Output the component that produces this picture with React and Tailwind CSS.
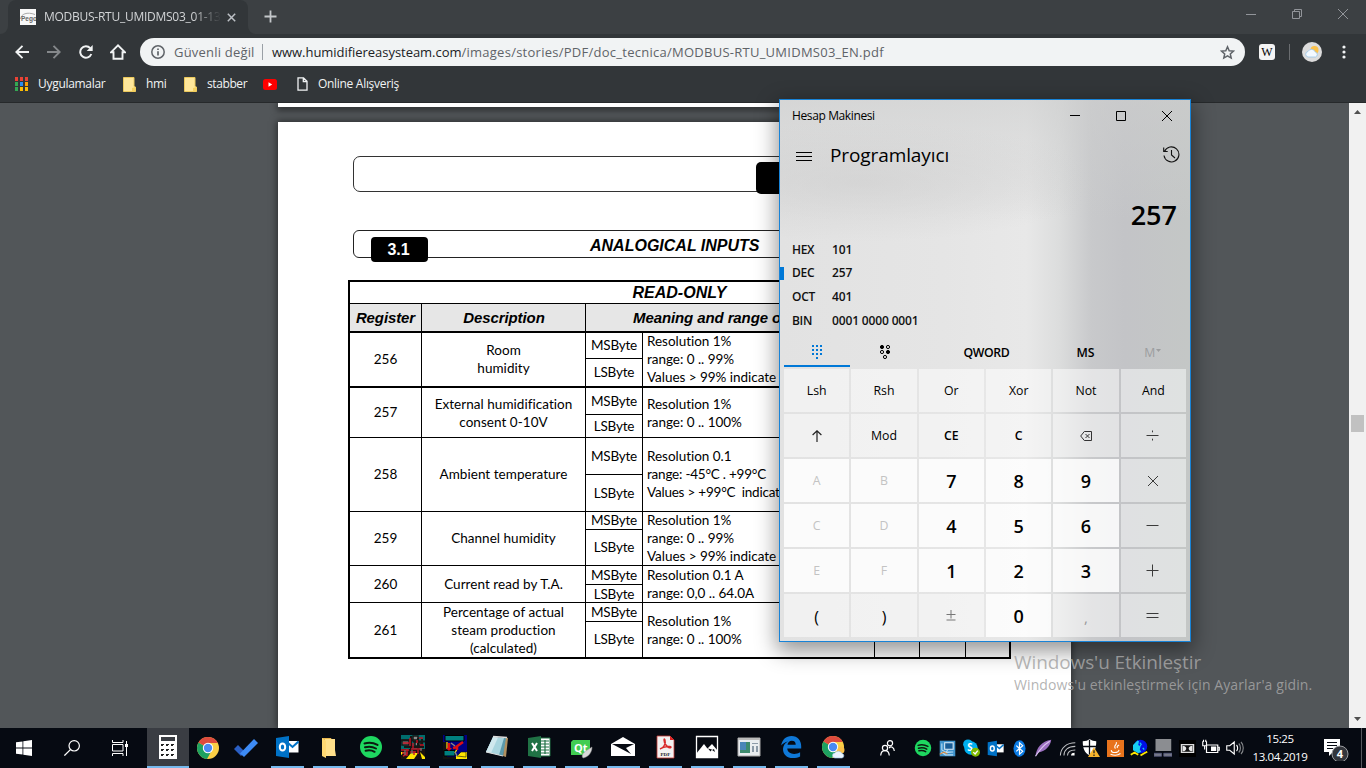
import React from "react";

const UI = "font-['Open_Sans','Noto_Sans',sans-serif]";

/* ---------- browser ---------- */

function TabStrip() {
  return (
    <div className="flex h-[34px] bg-[#3c4043]">
      <div className="flex w-2 items-end bg-[#323639]">
        <div className="h-[34px] w-2 rounded-br-lg bg-[#3c4043]" />
      </div>
      <div className="flex h-[34px] w-[240px] items-center rounded-t-lg bg-[#323639] pl-3">
        <svg width="16" height="16" viewBox="0 0 16 16" className="shrink-0">
          <rect width="16" height="16" fill="#f8f8f8" />
          <path d="M.5 10C1 5 7 2.500 15 5.500" stroke="#aaa" fill="none" />
          <text x="1" y="12" fontSize="6.500" fontWeight="700" fill="#666" fontFamily="Liberation Sans">Pego</text>
        </svg>
        <div className="ml-2 w-[177px] overflow-hidden whitespace-nowrap text-[12px] leading-[18px] tracking-[-0.26px] text-[#d2d4d6] [mask-image:linear-gradient(to_right,black_84%,transparent)]">
          MODBUS-RTU_UMIDMS03_01-13
        </div>
        <svg width="9" height="9" viewBox="0 0 9 9" className="ml-[6px] shrink-0">
          <path d="M.8.8l7.4 7.4M8.2.8L.8 8.2" stroke="#bdc1c6" strokeWidth="1.5" />
        </svg>
      </div>
      <div className="flex w-2 bg-[#323639]">
        <div className="h-[34px] w-2 rounded-bl-lg bg-[#3c4043]" />
      </div>
      <svg width="13" height="13" viewBox="0 0 13 13" className="ml-[8px] mt-[10px]">
        <path d="M6.500.5v12M.5 6.500h12" stroke="#c4c7ca" strokeWidth="1.8" />
      </svg>
      <div className="ml-auto mr-[18px] mt-[9px] flex gap-9">
        <svg width="10" height="11" viewBox="0 0 10 11"><path d="M0 5.500h10" stroke="#92959a" /></svg>
        <svg width="10" height="11" viewBox="0 0 10 11"><path d="M.5 2.500h7v7h-7zM2.500 2.500v-2h7v7h-2" fill="none" stroke="#92959a" /></svg>
        <svg width="10" height="10" viewBox="0 0 10 10"><path d="M0 0l10 10M10 0L0 10" stroke="#92959a" /></svg>
      </div>
    </div>
  );
}

function Toolbar() {
  return (
    <div className="flex h-9 items-center bg-[#323639]">
      <svg width="14" height="14" viewBox="0 0 14 14" className="ml-[15px]"><path d="M14 7H1.500M7.500.8L1.300 7l6.200 6.200" fill="none" stroke="#f1f3f4" strokeWidth="1.9" /></svg>
      <svg width="14" height="14" viewBox="0 0 14 14" className="ml-[18px]"><path d="M0 7h12.500M6.500.8L12.700 7l-6.200 6.200" fill="none" stroke="#85888b" strokeWidth="1.9" /></svg>
      <svg width="14" height="14" viewBox="0 0 14 14" className="ml-[18px]">
        <path d="M12.300 9A5.700 5.700 0 1 1 11.200 3.200" fill="none" stroke="#f1f3f4" strokeWidth="2" />
        <path d="M13.700 0v6H7.700z" fill="#f1f3f4" />
      </svg>
      <svg width="16" height="16" viewBox="0 0 16 16" className="ml-[17px]"><path d="M1.200 8.200L8 1.400l6.800 6.800h-2.300V14.800h-9V8.200z" fill="none" stroke="#f1f3f4" strokeWidth="1.9" /></svg>
      <div className="ml-[14px] flex h-7 w-[1105px] items-center rounded-full bg-[#f1f3f4] text-[#5f6368]">
        <svg width="14" height="14" viewBox="0 0 14 14" className="ml-[11px]"><circle cx="7" cy="7" r="6.200" fill="none" stroke="#5f6368" strokeWidth="1.500" /><path d="M7 6.200v4.200M7 3.500v1.600" stroke="#5f6368" strokeWidth="1.700" /></svg>
        <span className="ml-[9px] w-[81px] whitespace-nowrap pt-px text-[13px] tracking-[0.2px]">Güvenli değil</span>
        <span className="mx-[7px] h-4 w-px bg-[#9aa0a6]" />
        <span className="ml-[2px] whitespace-nowrap pt-px text-[13px] tracking-[0.26px]">
          <span className="tracking-[-0.04px] text-[#202124]">www.humidifiereasysteam.com</span>/images/stories/PDF/doc_tecnica/MODBUS-RTU_UMIDMS03_EN.pdf
        </span>
        <svg width="15" height="15" viewBox="0 0 15 15" className="ml-auto mr-[10px]"><path d="M7.500 1.800l1.700 3.900 4.300.4-3.200 2.800.9 4.200-3.700-2.200-3.700 2.200.9-4.200L1.500 6.100l4.300-.4z" fill="none" stroke="#5f6368" strokeWidth="1.500" /></svg>
      </div>
      <div className="ml-[14px] flex h-4 w-4 items-center justify-center rounded-[3px] bg-[#f4f4f4] font-['Liberation_Serif',serif] text-[12px] text-black">W</div>
      <div className="ml-[14px] h-4 w-px bg-[#6a6d70]" />
      <svg width="20" height="20" viewBox="0 0 20 20" className="ml-[12px]">
        <circle cx="10" cy="10" r="10" fill="#dcdcdc" /><circle cx="12.500" cy="8" r="4" fill="#fbc14a" />
        <path d="M6 15a2.800 2.800 0 0 1 0-5.500 4 4 0 0 1 7.300.5A2.600 2.600 0 0 1 13.500 15z" fill="#f3f9ff" stroke="#8fc1e8" strokeWidth=".7" />
      </svg>
      <svg width="4" height="14" viewBox="0 0 4 14" className="ml-[20px]"><g fill="#f1f3f4"><circle cx="2" cy="2" r="1.600" /><circle cx="2" cy="7" r="1.600" /><circle cx="2" cy="12" r="1.600" /></g></svg>
    </div>
  );
}

function FolderMark() {
  return (
    <svg width="13" height="15" viewBox="0 0 13 15" className="mr-[10px] shrink-0">
      <path d="M.5.500h10.500v9l1.500.5v4.500H.5z" fill="#ffe79a" stroke="#ecc95c" /><path d="M9 14.500v-3.500l3.500-1v4.500z" fill="#f5d160" />
    </svg>
  );
}

function Bookmarks() {
  const colors = ["#ea4335", "#ea4335", "#ea4335", "#34a853", "#2b8cf0", "#fb9d05", "#34a853", "#fbbc05", "#fbbc05"];
  return (
    <div className="flex h-[33px] items-center border-b border-[#26292b] bg-[#323639] pb-[4px] text-[12px] text-[#f1f3f4]">
      <div className="ml-[15px] flex w-[108px] items-center tracking-[-0.3px]">
        <svg width="13" height="14" viewBox="0 0 13 14" className="mr-[10px]">
          {colors.map((c, i) => <rect key={i} x={(i % 3) * 5} y={Math.floor(i / 3) * 5} width="3" height="4" fill={c} />)}
        </svg>
        Uygulamalar
      </div>
      <div className="flex w-[61px] items-center tracking-[-0.4px]"><FolderMark />hmi</div>
      <div className="flex w-[79px] items-center tracking-[-0.4px]"><FolderMark />stabber</div>
      <svg width="14" height="11" viewBox="0 0 14 11"><rect width="14" height="11" rx="2.500" fill="#f00" /><path d="M5.500 3.300v4.400l3.700-2.200z" fill="#fff" /></svg>
      <svg width="11" height="14" viewBox="0 0 11 14" className="ml-[20px] mr-[10px]"><path d="M1 .8h5.500L10 4.300v8.900H1zM6.300.8v3.700H10" fill="none" stroke="#f1f3f4" strokeWidth="1.300" /></svg>
      <span className="tracking-[-0.3px]">Online Alışveriş</span>
    </div>
  );
}

/* ---------- document ---------- */

const rows = [
  { reg: "256", desc: ["Room", "humidity"], text: ["Resolution 1%", "range: 0 .. 99%", "Values > 99% indicate"], h: "h-[55px] border-b-2", ms: "h-[26px] pb-[2px]", cell: "pb-px" },
  { reg: "257", desc: ["External humidification", "consent 0-10V"], text: ["Resolution 1%", "range: 0 .. 100%"], h: "h-[50px] border-b", ms: "h-[27px]", cell: "pt-px" },
  { reg: "258", desc: ["Ambient temperature"], text: ["Resolution 0.1", "range: -45°C . +99°C", "Values > +99°C  indicat"], h: "h-[74px] border-b", ms: "h-[37px]", cell: "pb-px" },
  { reg: "259", desc: ["Channel humidity"], text: ["Resolution 1%", "range: 0 .. 99%", "Values > 99% indicate"], h: "h-[54px] border-b", ms: "h-[18px] pb-[2px]", cell: "pb-px" },
  { reg: "260", desc: ["Current read by T.A."], text: ["Resolution 0.1 A", "range: 0,0 .. 64.0A"], h: "h-[37px] border-b", ms: "h-[19px]", cell: "" },
  { reg: "261", desc: ["Percentage of actual", "steam production", "(calculated)"], text: ["Resolution 1%", "range: 0 .. 100%"], h: "h-[54px]", ms: "h-[19px]", cell: "" },
];

function RegisterTable() {
  return (
    <div className="ml-[70px] mt-[22px] w-[663px] border-2 border-black text-black">
      <div className="flex h-[22px] items-center justify-center border-b border-black font-['Liberation_Sans',sans-serif] text-[16px] font-bold italic">
        READ-ONLY
      </div>
      <div className="flex h-[29px] border-b-2 border-black bg-[#e6e6e6] font-['Liberation_Sans',sans-serif] text-[15px] font-bold italic tracking-[-0.1px]">
        <div className="flex w-[72px] items-center justify-center border-r border-black pt-[2px]">Register</div>
        <div className="flex w-[164px] items-center justify-center border-r border-black pl-px pt-[2px]">Description</div>
        <div className="flex flex-1 items-center whitespace-nowrap pl-[47px] pt-[2px]">Meaning and range o</div>
      </div>
      {rows.map((r) => (
        <div key={r.reg} className={`flex border-black font-['Lato','Open_Sans',sans-serif] text-[13.5px] leading-[18px] [font-variant-ligatures:none] ${r.h}`}>
          <div className="flex w-[72px] items-center justify-center border-r border-black pb-px">{r.reg}</div>
          <div className={`flex w-[164px] flex-col items-center justify-center border-r border-black tracking-[0.04px] ${r.cell}`}>
            {r.desc.map((d) => <span key={d} className="whitespace-nowrap">{d}</span>)}
          </div>
          <div className="flex w-[57px] flex-col border-r border-black tracking-[-0.2px]">
            <div className={`flex shrink-0 items-center justify-center border-b border-black ${r.ms}`}>MSByte</div>
            <div className="flex flex-1 items-center justify-center pb-px">LSByte</div>
          </div>
          <div className={`flex w-[232px] flex-col justify-center border-r border-black pl-1 ${r.cell}`}>
            {r.text.map((d) => <span key={d} className={`whitespace-pre ${d.includes("°") ? "tracking-[-0.22px]" : "tracking-[-0.03px]"}`}>{d}</span>)}
          </div>
          <div className="w-[45px] border-r border-black" />
          <div className="w-[46px] border-r border-black" />
        </div>
      ))}
    </div>
  );
}

function Viewer() {
  return (
    <div className="flex h-[625px] overflow-hidden bg-[#525659]">
      <div className="ml-[278px] flex w-[793px] flex-col">
        <div className="h-[4px] shrink-0 bg-white shadow-[0_2px_6px_1px_rgba(0,0,0,0.55)]" />
        <div className="mt-[15px] flex-1 bg-white shadow-[0_0_7px_1px_rgba(0,0,0,0.5)]">
          <div className="ml-[75px] mt-[34px] flex h-[36px] w-[655px] rounded-[7px] border border-[#333]">
            <div className="ml-[402px] mt-[5px] h-[32px] w-[70px] rounded-[5px] bg-black" />
          </div>
          <div className="ml-[75px] mt-[38px] flex h-[28px] w-[655px] rounded-[6px] border border-[#222] font-['Liberation_Sans',sans-serif] text-[16px] font-bold">
            <div className="ml-[17px] mt-[6px] flex h-[25px] w-[57px] items-center justify-center rounded-[4px] bg-black pr-[2px] text-white">3.1</div>
            <div className="ml-[162px] mt-[3px] italic text-black">ANALOGICAL INPUTS</div>
          </div>
          <RegisterTable />
        </div>
      </div>
      <div className="ml-auto flex w-[17px] flex-col items-center bg-[#f1f1f1]">
        <svg width="7" height="4" viewBox="0 0 7 4" className="mt-[7px]"><path d="M0 4h7L3.500 0z" fill="#505050" /></svg>
        <div className="mt-[301px] h-[17px] w-[13px] bg-[#c1c1c1]" />
        <svg width="7" height="4" viewBox="0 0 7 4" className="mb-[7px] mt-auto"><path d="M0 0h7L3.500 4z" fill="#505050" /></svg>
      </div>
    </div>
  );
}

/* ---------- calculator ---------- */

const OP = "bg-white/50 pt-[2px]";
const HX = "bg-white/85 pt-[2px] text-[#c3c3c3]";
const NUM = "bg-white/85 pt-[2px] text-[18px] font-semibold";
const SIDE = "bg-[#f2f4f3]/60";
const g = (d) => <svg width="14" height="14" viewBox="0 0 14 14"><path d={d} fill="none" stroke="#3a3a3a" strokeWidth="1" /></svg>;

const keys = [
  ["Lsh", OP], ["Rsh", OP], ["Or", OP], ["Xor", OP], ["Not", OP], ["And", SIDE + " pt-[2px]"],
  [<svg width="10" height="12" viewBox="0 0 10 12"><path d="M5 12V1M.6 5L5 .8 9.400 5" fill="none" stroke="#222" strokeWidth="1.200" /></svg>, "bg-white/50"],
  ["Mod", OP], ["CE", OP + " font-semibold"], ["C", OP + " font-semibold"],
  [<svg width="12" height="10" viewBox="0 0 12 10"><path d="M4.300.500h7.200v9H4.300L.7 5zM5.500 3l4 4M9.500 3l-4 4" fill="none" stroke="#333" /></svg>, "bg-white/50"],
  [g("M.500 6.500h12M6.500 1.500v1.800M6.500 9.700v1.800"), SIDE],
  ["A", HX], ["B", HX], ["7", NUM], ["8", NUM], ["9", NUM], [g("M2 2l10 10M12 2L2 12"), SIDE],
  ["C", HX], ["D", HX], ["4", NUM], ["5", NUM], ["6", NUM], [g("M.500 6.500h12"), SIDE],
  ["E", HX], ["F", HX], ["1", NUM], ["2", NUM], ["3", NUM], [g("M.500 6.500h12M6.500 .500v12"), SIDE],
  ["(", OP + " text-[16px]"], [")", OP + " text-[16px]"],
  [<svg width="10" height="11" viewBox="0 0 10 11"><path d="M.5 4.500h9M5 0v8.500M.5 10h9" fill="none" stroke="#777" /></svg>, "bg-white/50"],
  ["0", NUM], [",", "bg-white/50 pt-1 text-[15px] text-[#999]"], [g("M.500 4.500h12M.500 8.500h12"), SIDE],
];

function Calculator() {
  return (
    <div className="absolute left-[779px] top-[99px] flex h-[543px] w-[412px] flex-col border border-[#1883d7] bg-[radial-gradient(ellipse_240px_60px_at_80px_82px,rgba(203,203,203,0.5),transparent),linear-gradient(to_bottom,rgba(205,206,206,0.6),transparent_120px),linear-gradient(to_right,#e2e2e2_0,#e5e5e5_40%,#e8e8e8_60%,#dcdddd_68%,#c8c9cb_76%,#c3c4c7_84%,#c4c7c6_100%)] text-[12.300px] text-black shadow-[0_7px_20px_2px_rgba(0,0,0,0.42)]">
      <div className="flex h-8 items-center pl-3">
        <span className="text-[12px] tracking-[-0.38px]">Hesap Makinesi</span>
        <div className="mb-px ml-auto mr-[18px] flex items-center gap-9">
          <svg width="10" height="11" viewBox="0 0 10 11"><path d="M0 5.500h10" stroke="#000" /></svg>
          <svg width="10" height="10" viewBox="0 0 10 10"><path d="M.5.500h9v9h-9z" stroke="#000" fill="none" /></svg>
          <svg width="10" height="10" viewBox="0 0 10 10"><path d="M0 0l10 10M10 0L0 10" stroke="#000" /></svg>
        </div>
      </div>
      <div className="flex h-[46px] items-center pl-4">
        <svg width="16" height="9" viewBox="0 0 16 9" className="mt-[2px]"><path d="M0 .500h16M0 4.500h16M0 8.500h16" stroke="#000" /></svg>
        <span className="ml-[18px] text-[19px] tracking-[-0.1px]">Programlayıcı</span>
        <svg width="17" height="17" viewBox="0 0 17 17" className="mb-[2px] ml-auto mr-[10px]">
          <path d="M1.500 5.500A7.500 7.500 0 1 1 1 9.500M.7 1.500v4h4M8.500 4v5l3.500 3" fill="none" stroke="#111" strokeWidth="1.100" />
        </svg>
      </div>
      <div className="flex h-[60px] items-center justify-end pr-[13px] pt-[14px] text-[27px] font-semibold">257</div>
      <div className="flex flex-col text-[12px] font-semibold tracking-[-0.1px] text-[#111]">
        {[["HEX", "101"], ["DEC", "257"], ["OCT", "401"], ["BIN", "0001 0000 0001"]].map(([k, v]) => (
          <div key={k} className="flex h-[23.600px] items-center">
            <span className={`shrink-0 ${k === "DEC" ? "h-[13px] w-1 bg-[#0078d7]" : "w-1"}`} />
            <span className="w-12 shrink-0 pl-2 tracking-[-0.3px]">{k}</span>
            <span className="whitespace-nowrap tracking-[-0.15px]">{v}</span>
          </div>
        ))}
      </div>
      <div className="mx-1 flex h-[35px] items-end font-semibold">
        <div className="flex h-[34px] w-[66px] items-center justify-center border-b-2 border-[#0078d7] pt-[5px]">
          <svg width="10" height="14" viewBox="0 0 10 14" fill="#0078d7">
            {[0, 4, 8].map((y) => [0, 4, 8].map((x) => <rect key={`${x}-${y}`} x={x} y={y} width="2" height="2" />))}
            <rect x="4" y="12" width="2" height="2" />
          </svg>
        </div>
        <div className="flex h-[34px] w-[69px] items-center justify-center pl-[2px] pt-[3px]">
          <svg width="10" height="14" viewBox="0 0 10 14" fill="none" stroke="#000">
            <circle cx="2" cy="2" r="1.600" fill="#000" /><circle cx="8" cy="2" r="1.600" /><circle cx="2" cy="7" r="1.600" /><circle cx="8" cy="7" r="1.600" fill="#000" /><circle cx="5" cy="12" r="1.600" />
          </svg>
        </div>
        <div className="flex h-[34px] w-[135px] items-center justify-center pl-[2px] pt-[6px] tracking-[-0.35px]">QWORD</div>
        <div className="flex h-[34px] w-[64px] items-center justify-center pl-[2px] pt-[6px]">MS</div>
        <div className="flex h-[34px] w-[70px] items-center justify-center gap-px pl-[3px] pt-[6px] font-normal text-[#9c9d9f]">M
          <svg width="5" height="3" viewBox="0 0 5 3" className="mb-[6px]"><path d="M0 0h5L2.500 3z" fill="#9c9d9f" /></svg>
        </div>
      </div>
      <div className="mx-1 mb-1 mt-auto grid h-[268px] grid-cols-6 grid-rows-6 gap-[2px]">
        {keys.map(([label, style], i) => <div key={i} className={`flex items-center justify-center ${style}`}>{label}</div>)}
      </div>
    </div>
  );
}

/* ---------- taskbar ---------- */

const Ico = ({ s = 24, children }) => <svg width={s} height={s} viewBox="0 0 24 24">{children}</svg>;

const Spotify = ({ s }) => (
  <Ico s={s}><circle cx="12" cy="12" r="11" fill="#1ed760" /><path d="M5.500 8.500c4.500-1.300 9-.8 13 1.400M6 12.300c4-1.100 7.800-.6 11 1.200M6.600 15.800c3.400-.9 6.400-.5 9 1" fill="none" stroke="#0b1a10" strokeWidth="2" strokeLinecap="round" /></Ico>
);
const Chrome = ({ badge }) => (
  <Ico>
    <circle cx="12" cy="12" r="11" fill="#fbcf45" />
    <path d="M12 12L2.500 6.500A11 11 0 0 0 11 23l4.800-8.800z" fill="#1da261" />
    <path d="M12 12L2.500 6.500A11 11 0 0 1 21.700 7H12z" fill="#dd4b3e" />
    <circle cx="12" cy="12" r="5.200" fill="#fff" /><circle cx="12" cy="12" r="4.200" fill="#4a8af4" />
    {badge && <><circle cx="20" cy="15" r="3.500" fill="#fbc14a" /><path d="M14 23a2.500 2.500 0 0 1 0-5 4 4 0 0 1 7 .5 2.300 2.300 0 0 1 0 4.500z" fill="#eaf5ff" stroke="#9cc8ea" strokeWidth=".6" /></>}
  </Ico>
);
const Outlook = ({ s }) => (
  <Ico s={s}><path d="M13 6h10.500v11.500H13z" fill="#fff" /><path d="M13 8l4.500 4L23.500 6.500" fill="none" stroke="#0072c6" strokeWidth="2" /><path d="M1 3L14 1v22L1 21z" fill="#0072c6" /><ellipse cx="7.500" cy="12" rx="2.700" ry="3.600" fill="none" stroke="#fff" strokeWidth="2" /></Ico>
);

const apps = [
  <Outlook key="o" />,
  <Ico key="f"><path d="M5 3h9l1 2h3v16H5z" fill="#e9b84e" /><path d="M8 4h10v11l1 6H8z" fill="#ffe08a" /><path d="M5 3l4 3v17l-4-2z" fill="#ffd872" /></Ico>,
  <Spotify key="s" />,
  <Ico key="p1"><path d="M0 0h24v24H0z" fill="#006d6d" /><path d="M0 14h24v10H0z" fill="#1a1210" /><path d="M5 24l5-6h7l-4 6zM19 17l5 5v2h-3zM0 17h4l-4 3z" fill="#ffe600" /><path d="M1 5h7v5H1zM12 1h5v4h-5zM14 7h5v4h-5z" fill="#8a8a8a" stroke="#161616" strokeWidth="1.500" /><path d="M0 5.500h12M10 1v14M12 6.500h12M17 3v11M21 4v8M3 12h20" stroke="#161616" strokeWidth="2" /><path d="M9 3v8M2 8h6M18 3h4M12 8v5M16 5v3M19 10h4" stroke="#c01020" strokeWidth="1.500" /><path d="M0 15h8M10 14h11M1 18h6M13 16v4M6 14v7M17 15v4M2 21l4-2M9 17h6" stroke="#c01828" strokeWidth="1.400" /><path d="M4 15v5M11 15v4M20 13v3" stroke="#777" strokeWidth="1.200" /></Ico>,
  <Ico key="p2"><path d="M0 0h24v24H0z" fill="#000084" /><path d="M0 7h4v17H0zM0 22h14v2H0z" fill="#111" /><path d="M2 .500h19v5.500H2zM1 15.500h11v5.500H1z" fill="#008080" stroke="#000" /><path d="M13 21h10v-4h1v7H13z" fill="#ffe600" /><path d="M14 21l4-4h5v5z" fill="#ffe600" stroke="#111" strokeWidth=".6" /><path d="M4 7v7M14 14l-2 4" stroke="#ffe600" strokeWidth="1.200" /><path d="M6 8v5M10 13l4-1v3M20 7l-7 5" stroke="#e01010" strokeWidth="2.500" fill="none" /><path d="M3 13h6l-3 3z" fill="#e01010" /><path d="M8 8l4 3M12 17l2 4" stroke="#888" strokeWidth="1.500" /></Ico>,
  <Ico key="n"><path d="M19 2l4 1-2 19-3-1z" fill="#b09060" /><path d="M8 2l13 1-3 18L1 17z" fill="#5b9aac" /><path d="M8 2l11 1-5 17L1 17z" fill="#a9d5df" /><path d="M8 2l5 .5-7 15.500-5-1z" fill="#d0e8ee" /><path d="M8 1.500l14 1" stroke="#ddd" strokeWidth="1.500" fill="none" /><path d="M1 17l17 4" stroke="#ddd" /></Ico>,
  <Ico key="x"><path d="M12 3h11v18H12z" fill="#fff" stroke="#207245" /><path d="M14 6h8M14 9h8M14 12h8M14 15h8M14 18h8M18 5v14" stroke="#207245" strokeWidth="1.200" /><path d="M1 3L14 1v22L1 21z" fill="#207245" /><path d="M5 8l5 8M10 8l-5 8" stroke="#fff" strokeWidth="2" /></Ico>,
  <Ico key="q"><path d="M4 5h17v12l-3 3H2V7z" fill="#41cd52" /><text x="5" y="16.500" fontSize="11" fontWeight="700" fill="#fff" fontFamily="Open Sans">Qt</text><path d="M23 12c0 6-4 10-9 11-3-4 3-7 9-11z" fill="#d9d9d9" stroke="#999" strokeWidth=".5" /></Ico>,
  <Ico key="m"><path d="M0 9l12-7 12 7v12H0z" fill="#fff" /><path d="M1 9h22l-8 4 5 6-17-9z" fill="#060a12" /></Ico>,
  <Ico key="pdf"><path d="M4 1h13l4 4v18H4z" fill="#f3f1f1" stroke="#c73a35" strokeWidth=".8" /><path d="M17 1v4h4z" fill="#d22" /><path d="M7 14c4-1 6-6 5-9s-2 1 1 5 5 3 5 2-6-1-11 2" fill="none" stroke="#d92b2b" strokeWidth="1.400" /><text x="7.500" y="20.500" fontSize="5" fontWeight="700" fill="#222" fontFamily="Liberation Serif">PDF</text></Ico>,
  <Ico key="ph"><path d="M1.500 1.500h21v21h-21z" fill="#060a12" stroke="#fff" strokeWidth="1.300" /><path d="M1 19l8-10 6 8v6H1z" fill="#fff" /><path d="M12 14l5-5 6 7v7H12z" fill="#fff" /><path d="M13 13.500l4 1-1.500 2zM17 15l2-1 1 3z" fill="#060a12" /></Ico>,
  <Ico key="w"><path d="M1 3h22v18H1z" fill="#e9edf0" stroke="#aaa" /><path d="M1 3h22v2H1z" fill="#bbb" /><path d="M3 7h10v11H3z" fill="#3d8b6e" /><path d="M3 7h6v8H3z" fill="#4a86b8" /><path d="M15 8h6v1h-6zM15 11h2v6h-2zM19 11h2v6h-2z" fill="#8b9aa8" /></Ico>,
  <Ico key="e"><path d="M2.200 10.600C3 4.800 7 1 12.500 1 18.800 1 22.200 5.700 22.200 11v2.600H8.300c.2 3.700 3.200 5.300 6.800 5.300 2.300 0 4.300-.6 6-1.700v4.300c-2 1.100-4.500 1.600-7.200 1.600C7.800 23.100 4 19.500 4 14c0-3.400 2-6.200 5-7.600-2.700.5-5 1.800-6.800 4.200zm6.300-.9h8.200c0-2.400-1.200-4-3.900-4-2.500 0-4 1.800-4.300 4z" fill="#0f78d7" /></Ico>,
  <Chrome key="c2" badge />,
];

const tray = [
  <Spotify key="s" s={18} />,
  <Ico key="i" s={17}><path d="M1 1h22v22H1z" fill="#3f93cc" /><path d="M8 4h12v9H8z" fill="#185d97" stroke="#dcecf7" strokeWidth="1.500" /><path d="M3 17l6 4h11M4 5v9l5 3h11M13 13l-4 5 9-1" fill="none" stroke="#b9dcf2" strokeWidth="1.500" /><path d="M1 20l6-3 5 3" stroke="#e08a3a" strokeWidth="1.500" fill="none" /></Ico>,
  <Ico key="sk" s={18}><circle cx="8" cy="7" r="6.500" fill="#00aff0" /><circle cx="12" cy="12" r="9" fill="#00aff0" /><text x="7" y="15.500" fontSize="13" fontWeight="700" fill="#fff" fontFamily="Open Sans">S</text><circle cx="18" cy="17.500" r="6" fill="#7fba00" /><path d="M15 17.500l2.500 2.500L21 15.500" fill="none" stroke="#fff" strokeWidth="1.800" /></Ico>,
  <Outlook key="o" s={17} />,
  <Ico key="b" s={17}><ellipse cx="12" cy="12" rx="8.500" ry="11.500" fill="#0a7be4" /><path d="M7.500 8l9 8-4.500 4V4l4.500 4-9 8" fill="none" stroke="#fff" strokeWidth="1.700" /></Ico>,
  <Ico key="fe" s={18}><path d="M2 23C3 12 10 3 23 1c-1 8-7 15-17 17z" fill="#9b6fc0" /><path d="M2 23C7 15 13 8 21 3" stroke="#dcc6ee" strokeWidth="1.500" fill="none" /></Ico>,
  <Ico key="wf" s={17}><g fill="none" stroke="#bfc1c4" strokeWidth="1.500"><path d="M2 22C2 11 11 4 23 4M7 22c0-8 6-13 16-13M12 22c0-5 4-8 11-8" /></g><path d="M17 22c0-3 2-4 5-4v4z" fill="#fff" /></Ico>,
  <Ico key="sh" s={18}><path d="M1 3c4 0 7-1 9-3 3 2 6 3 9 3 0 9-2 15-9 19C3 18 1 12 1 3z" fill="#fff" /><path d="M10 1v20M1 10h18" stroke="#060a12" strokeWidth="1.700" /><path d="M16 11l8 13H8z" fill="#f9b52c" /><path d="M16 15v4M16 20.500v2" stroke="#222" strokeWidth="1.700" /></Ico>,
  <Ico key="j" s={17}><path d="M0 0h24v24H0z" fill="#e8731c" /><path d="M6 14c0 5 10 5 11 0M5 20c5 2 10 2 14-1M12 12c-4-4 3-5 1-9M15 11c-2-2 1-3 2-4" fill="none" stroke="#fff" strokeWidth="1.500" /></Ico>,
  <Ico key="g" s={18}><circle cx="14" cy="10" r="9" fill="#0010e8" /><path d="M4 8l6-6 2 1-1 5 3 2-1 4 2 3-4 2-7-4z" fill="#16cdf2" /><path d="M13 5l2 2-2 3M17 12l2 2" stroke="#16cdf2" strokeWidth="1.500" fill="none" /><path d="M1 21l5-3 5 3M14 22l5-3 4-2" stroke="#ffe600" strokeWidth="2.500" fill="none" /></Ico>,
  <Ico key="t" s={18}><path d="M2 0h21v16H2z" fill="#8b8d91" /><path d="M0 19h10v4H0zM13 19h11v4H13z" fill="#777a88" stroke="#555a80" /></Ico>,
  <Ico key="d" s={17}><path d="M0 0h24v24H0z" fill="#000" /><path d="M3.500 6.500h17v11h-17z" fill="#111" stroke="#ddd" strokeWidth="2" /><path d="M5 8c7 0 7 8 0 8zM19 8c-7 0-7 8 0 8z" fill="#e8e8e8" /></Ico>,
  <Ico key="ba" s={18}><path d="M6 8h15v10H6zM21 11h2v4h-2" fill="none" stroke="#fff" strokeWidth="1.600" /><path d="M12 10h7v6h-7z" fill="#fff" /><path d="M1 3v6h5V3M2 1v3M5 1v3M3.500 9v5" stroke="#fff" strokeWidth="1.500" fill="none" /></Ico>,
  <Ico key="v" s={18}><path d="M1 9h4l6-5v16l-6-5H1zM14 8c2 2 2 6 0 8" fill="none" stroke="#fff" strokeWidth="1.500" /><path d="M17 6c3 3 3 9 0 12M20 4c4 4 4 12 0 16" fill="none" stroke="#85888b" strokeWidth="1.500" /></Ico>,
];

function Taskbar() {
  return (
    <div className="flex h-10 bg-[#060a12] text-white">
      <div className="flex w-12 items-center justify-center">
        <svg width="16" height="16" viewBox="0 0 16 16"><path d="M0 2.300L6.500 1.400v6.200H0zM7.300 1.300L16 0v7.600H7.300zM0 8.400h6.500v6.200L0 13.700zM7.300 8.400H16V16l-8.700-1.300z" fill="#fff" /></svg>
      </div>
      <div className="flex w-12 items-center justify-center">
        <svg width="16" height="16" viewBox="0 0 16 16"><circle cx="10.200" cy="5.800" r="5.200" fill="none" stroke="#fff" strokeWidth="1.200" /><path d="M6.400 9.600L.4 15.600" stroke="#fff" strokeWidth="1.300" /></svg>
      </div>
      <div className="flex w-[51px] items-center justify-center pr-[3px]">
        <svg width="16" height="16" viewBox="0 0 16 16"><path d="M.500 0v2.500h10.500V0M.500 16v-2.500h10.500V16M.500 4.500h10.500v6.500H.500zM14.500 1v15" fill="none" stroke="#fff" /><path d="M13 4h3v3h-3z" fill="#fff" /></svg>
      </div>
      <div className="flex w-[42px] items-center justify-center border-b-2 border-[#76b9ed] bg-[#3a3d43]">
        <svg width="18" height="24" viewBox="0 0 18 24"><path d="M0 0h18v24H0z" fill="#fff" /><path d="M2 2h14v4H2z" fill="#3a3d43" />{[9, 14, 19].map((y) => [2, 7, 12].map((x) => <path key={`${x}${y}`} d={`M${x} ${y}h3v1h-1v1h-2z`} fill="#222" />))}</svg>
      </div>
      <div className="flex w-[38px] items-center justify-center"><Chrome /></div>
      <div className="flex w-[39px] items-center justify-center pr-px"><Ico><path d="M0 13l4-4 7 7-4 4z" fill="#2a5fc4" /><path d="M6 17.500L20 3l4 4-14 14z" fill="#3d8bf5" /></Ico></div>
      {apps.map((a, i) => (
        <div key={i} className="flex w-[42px] items-center justify-center px-1">
          <div className="flex h-10 w-[33px] items-center justify-center border-b-2 border-[#76b9ed]">{a}</div>
        </div>
      ))}
      <div className="ml-[26px] flex w-[15px] items-center">
        <svg width="15" height="16" viewBox="0 0 15 16" fill="none" stroke="#fff" strokeWidth="1.200"><circle cx="5" cy="8" r="2.600" /><path d="M.7 15.500c.5-6.500 8-6.500 8.600 0" /><circle cx="10" cy="3.300" r="2.600" /><path d="M9 8c2-2 5-1 5.300 3" /></svg>
      </div>
      <div className="ml-[16px] flex">
        {tray.map((t, i) => <div key={i} className="flex w-6 items-center justify-center">{t}</div>)}
      </div>
      <div className="ml-[3px] flex w-[60px] flex-col items-center whitespace-nowrap pt-[2px] text-[11.500px] leading-[17.500px] tracking-[-0.35px]">
        <span>15:25</span><span>13.04.2019</span>
      </div>
      <div className="ml-[14px] flex w-[26px] items-center">
        <svg width="26" height="26" viewBox="0 0 26 26"><path d="M0 4h16v13H9l-4 4v-4H0z" fill="#fff" /><path d="M3 7.500h10M3 10.500h10M3 13.500h6" stroke="#060a12" /><circle cx="16" cy="19" r="8" fill="#33363c" stroke="#9a9ca0" /><text x="12.700" y="23" fontSize="11" fontWeight="700" fill="#fff" fontFamily="Open Sans">4</text></svg>
      </div>
      <div className="ml-auto mr-1 w-px bg-[#55585e]" />
    </div>
  );
}

export default function App() {
  return (
    <div className={`relative h-[768px] w-[1366px] overflow-hidden ${UI}`}>
      <TabStrip />
      <Toolbar />
      <Bookmarks />
      <Viewer />
      <Taskbar />
      <Calculator />
      <div className="absolute left-[1014px] top-[650px] whitespace-nowrap text-[#a5a5a5]/85">
        <div className="text-[19px] leading-[24px] tracking-[-0.1px]">Windows'u Etkinleştir</div>
        <div className="text-[14px] leading-[22px] tracking-[0.1px]">Windows'u etkinleştirmek için Ayarlar'a gidin.</div>
      </div>
    </div>
  );
}
